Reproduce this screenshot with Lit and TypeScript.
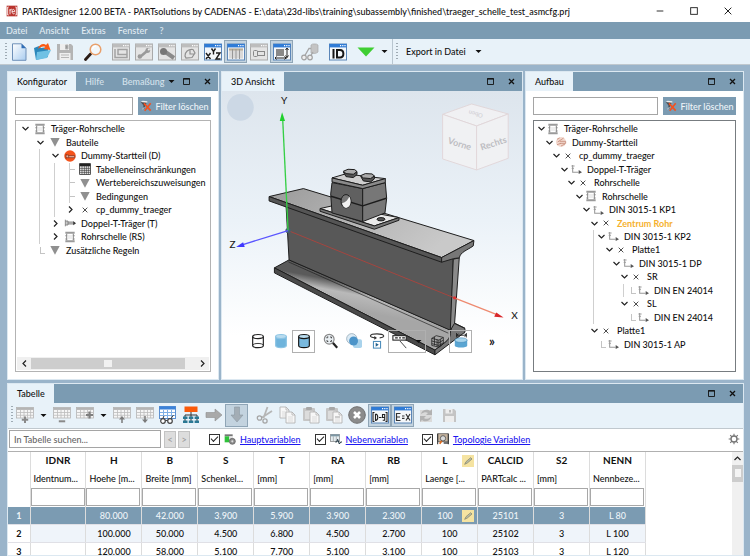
import { LitElement, html, css, svg, nothing } from "lit";
import { customElement, property } from "lit/decorators.js";
import { classMap } from "lit/directives/class-map.js";

/* ---------- icons, all on an 18 x 18 grid ---------- */
const frame = (inner: unknown, active = false) => svg`
  <rect x="0.5" y="1" width="17" height="16" fill=${active ? "#f4f7fa" : "#e4e4e4"} stroke=${active ? "#5b86b8" : "#a9a9a9"}/>
  <rect x="0.5" y="1" width="17" height="3.4" fill=${active ? "#2f7bd6" : "#bdbdbd"}/>
  <path d="M11 2.7h1.2M13.2 2.7h1.2M15.4 2.7h1.2" stroke="#fff" stroke-width="1.2"/>${inner}`;
const gridIcon = (extra: unknown) => svg`
  <rect x="0.5" y="1.5" width="17" height="10.5" fill="#f6f6f6" stroke="#b4b4b4" stroke-width="0.8"/>
  <rect x="0.5" y="1.5" width="17" height="2.4" fill="#b5b5b5"/>
  <path d="M1 6.5h16M1 9.3h16M4.5 4v8M8 4v8M11.5 4v8M14.6 4v8" stroke="#bcbcbc" stroke-width="0.8"/>${extra}`;
const sheet = (x: number, y: number) => svg`<path d="M${x} ${y}h6l3 3v8h-9z" fill="#f7f7f7" stroke="#b3b3b3" stroke-width="0.9"/><path d="M${x + 6} ${y}v3h3" fill="none" stroke="#b3b3b3" stroke-width="0.8"/><path d="M${x + 2} ${y + 5}h5M${x + 2} ${y + 7}h5M${x + 2} ${y + 9}h5" stroke="#d0d0d0" stroke-width="0.7"/>`;
const clip = svg`<rect x="1" y="2" width="12" height="13" rx="1" fill="#c6c6c6"/><rect x="4" y="1" width="6" height="3" rx="1" fill="#a8a8a8"/><rect x="3" y="5" width="8" height="8" fill="#dcdcdc"/>${sheet(8, 6)}`;
const cyl = (fill: string, stroke: string) => svg`<path d="M3 4v10c0 3.2 12 3.2 12 0V4" fill=${fill} stroke=${stroke} stroke-width="1.3"/><ellipse cx="9" cy="4" rx="6" ry="2.3" fill=${fill === "none" ? "none" : "#b9dcef"} stroke=${stroke} stroke-width="1.3"/>`;

const ICONS: Record<string, unknown> = {
  newDoc: svg`<defs><linearGradient id="nd" x2="1" y2="1"><stop stop-color="#fff"/><stop offset="1" stop-color="#a9cdf0"/></linearGradient></defs><path d="M2.5 0.8h9l4.5 4.5v12H2.5z" fill="url(#nd)" stroke="#6e90b8"/><path d="M11.5 0.8v4.5H16z" fill="#2f6db5"/>`,
  open: svg`<path d="M1 5l5-2 2 2 7-1v10l-12 3z" fill="#2b87ba"/><path d="M4 9l14-2-4 8-11 2z" fill="#6fc1e4"/><path d="M5 6C6 1 11 0 13 2l2-2 2.500 7-7-1 2-2c-3-1-5 0-7.500 2z" fill="#fa5a14"/>`,
  save: svg`<path d="M1 1h14l2 2v14H1z" fill="#b4b4b4"/><path d="M4 1h9v6H4zM3.500 10h11v7h-11z" fill="#eee"/><path d="M9.500 2h2.500v4H9.500zM5 12h8M5 14.500h8" fill="#999" stroke="#b5b5b5"/>`,
  search: svg`<path d="M1.500 16.500l5-5.500" stroke="#2b1c16" stroke-width="2.800" stroke-linecap="round"/><circle cx="11.500" cy="6.500" r="5.300" fill="#f3f8fb" stroke="#e9a06c" stroke-width="1.500"/><path d="M8.500 6c.500-2 2-3 3.500-3" fill="none" stroke="#fff" stroke-width="1.200"/>`,
  winTree: frame(svg`<path d="M3 6v8.500h12V6.500H6v5h9" fill="none" stroke="#a2a2a2" stroke-width="1.500"/>`),
  winWrench: frame(svg`<path d="M5 14l7-6" stroke="#9a9a9a" stroke-width="2.600"/><circle cx="4.800" cy="13.500" r="2.200" fill="#9a9a9a"/><circle cx="12.800" cy="7.500" r="2.400" fill="#9a9a9a"/><circle cx="13.800" cy="6.500" r="1.100" fill="#eee"/>`),
  winScrew: frame(svg`<path d="M6 8l10 7" stroke="#8a8a8a" stroke-width="4"/><circle cx="5.500" cy="8.500" r="3.500" fill="#777"/>`),
  winPoly: frame(svg`<path d="M4 13c0-4 3-7 8-6.500l2 3.500-3 4.500-6 .500zM9 6.500V11h5" fill="none" stroke="#909090" stroke-width="1.200"/>`),
  winXyz: frame(svg`<path d="M2 10l4.500 6M6.500 10L2 16M7.500 5.500l2 3 2-3M9.500 8.500v3M12 10h4l-4 6h4.500" fill="none" stroke="#1d1d1d" stroke-width="1.400"/>`, true),
  winCols: frame(svg`<path d="M2 5.500h14v10H2z" fill="#d9d9d9"/><path d="M2 5.500h14v2H2z" fill="#b9ad96"/><path d="M5.500 6v10M9 6v10M12.500 6v10" stroke="#979797"/>`, true),
  winTag: frame(svg`<rect x="3.500" y="7.500" width="4" height="6" rx="1" fill="none" stroke="#888"/><rect x="7.500" y="8.500" width="7" height="4" fill="none" stroke="#888"/>`),
  winDim: frame(svg`<rect x="3" y="6" width="8" height="7" fill="#888"/><path d="M14 5.500v9M2 15h12M12.500 7L14 5l1.500 2M12.500 12.500L14 14.500l1.500-2M3.500 13.500L2 15l1.500 1.500M11.500 13.500L13 15l-1.500 1.500" fill="none" stroke="#222"/>`, true),
  scan: svg`<path d="M10 2c1-1.500 6-1.500 7 0v7c-1 1.500-5 2-7 1z" fill="#c4c4c4" stroke="#aaa" stroke-width="0.700"/><path d="M3 14L8 5.500h2M9 14l3-5" fill="none" stroke="#a6a6a6" stroke-width="1.300"/><circle cx="3" cy="14.500" r="2.300" fill="#eee" stroke="#a2a2a2" stroke-width="1.200"/><circle cx="9" cy="14.500" r="2.300" fill="#eee" stroke="#a2a2a2" stroke-width="1.200"/>`,
  winId: frame(svg`<path d="M4.500 6v9.500M8 7h3c4.500 0 4.500 7.500 0 7.500H8z" fill="none" stroke="#161616" stroke-width="2"/>`, true),
  down: svg`<path d="M0.500 4.500h17L9 13.500z" fill="#3fce33"/>`,
  tAdd: gridIcon(svg`<path d="M9 10.500v6.500M5.800 13.800h6.400" stroke="#8a8a8a" stroke-width="2"/>`),
  tDel: gridIcon(svg`<path d="M5.800 15.300h6.400" stroke="#8a8a8a" stroke-width="2"/>`),
  tCol: gridIcon(svg`<path d="M13.500 5.500v7M10 9h7" stroke="#7f7f7f" stroke-width="2.200"/>`),
  tUp: gridIcon(svg`<path d="M9 17v-5" stroke="#7a7a7a" stroke-width="1.500"/><path d="M6 13.500l3-3.500 3 3.500z" fill="#7a7a7a"/>`),
  tDown: gridIcon(svg`<path d="M9 10v4" stroke="#7a7a7a" stroke-width="1.500"/><path d="M6 13.500l3 3.500 3-3.500z" fill="#7a7a7a"/>`),
  tView: svg`<rect x="0.500" y="0.500" width="16" height="12" fill="#fff" stroke="#5b8fd0"/><rect x="0.500" y="0.500" width="16" height="3" fill="#3b82d9"/><path d="M1 6.500h15M1 9.500h15M4.500 4v8M8.500 4v8M12.500 4v8" stroke="#7fb0e6"/><path d="M3 14l2-4M11 14l3.500-5" stroke="#444"/><circle cx="4" cy="15" r="2.300" fill="#fff" stroke="#444" stroke-width="1.200"/><circle cx="11" cy="15" r="2.300" fill="#fff" stroke="#444" stroke-width="1.200"/><path d="M6.300 14.500h2.400" stroke="#444"/>`,
  tTree: svg`<rect x="2.500" y="0.500" width="13" height="5.500" fill="#fb5a0a"/><path d="M9 6v3M3 9h12M3 9v8M9 9v8M15 9v8" stroke="#333" fill="none"/><path d="M1 10.500h4.500v2.500H1zM6.800 10.500h4.500v2.500H6.800zM12.600 10.500H17v2.500h-4.400zM1 14.500h4.500V17H1zM6.800 14.500h4.500V17H6.800zM12.600 14.500H17V17h-4.400z" fill="#2a7894"/>`,
  arrowR: svg`<path d="M1 6.500h9V3l7 6-7 6v-3.500H1z" fill="#a9a9a9" stroke="#8f8f8f" stroke-width="0.600"/>`,
  arrowD: svg`<path d="M6.500 1v8H3l6 7 6-7h-3.500V1z" fill="#a3adb5" stroke="#8c98a2" stroke-width="0.600"/>`,
  cut: svg`<path d="M11.500 1L7.500 12M16 5L6 11.500" stroke="#b6b6b6" stroke-width="1.800"/><circle cx="3.500" cy="12" r="2.200" fill="none" stroke="#a6a6a6" stroke-width="1.300"/><circle cx="9" cy="15" r="2.100" fill="none" stroke="#a6a6a6" stroke-width="1.300"/>`,
  copy: svg`${sheet(1, 1)}${sheet(7, 6)}`,
  paste: clip,
  paste2: svg`${clip}<path d="M10 11h5" stroke="#b0b0b0"/>`,
  cancel: svg`<circle cx="9" cy="9" r="8.300" fill="#8b8b8b" stroke="#707070"/><path d="M6 6l6 6M12 6l-6 6" stroke="#fff" stroke-width="2.600"/>`,
  range: frame(svg`<path d="M3.500 6.500H2v9h1.500M14.500 6.500H16v9h-1.500M4.500 8v6.500c3 0 3-6.500 0-6.500M8 11.500h2.500M13.500 11.500h-2V8.500h2.200v5.700h-2" fill="none" stroke="#222" stroke-width="1.100"/>`, true),
  formula: frame(svg`<path d="M6.500 7.500H2.500v7h4M2.500 11h3.500M8 10h2.500M8 12.300h2.500M12 8l4 6.500M16 8l-4 6.500" fill="none" stroke="#333" stroke-width="1.200"/>`, true),
  reload: svg`<path d="M3 4h12v12H3z" fill="#dadada"/><path d="M4 8c1-5 7-5 9-3l2-2v6H9l2-2c-2-1.500-4-1-7 1zM14 11c-1 5-7 5-9 3l-2 2v-6h6l-2 2c2 1.500 4 1 7-1z" fill="#b2b2b2"/>`,
  saveSmall: svg`<path d="M3 3h11l2 2v11H3z" fill="#c4c4c4"/><path d="M5.500 3h7v4.500h-7zM5 10h9v6H5z" fill="#ededed"/><path d="M10 4v2.500" stroke="#aaa" stroke-width="1.500"/>`,
  cylWire: svg`${cyl("none", "#222")}<path d="M3 14c0-3 12-3 12 0" fill="none" stroke="#222"/>`,
  cylSolid: cyl("#6fb4dc", "#8cc4e4"),
  cylEdge: cyl("#79b9de", "#151515"),
  zoomFit: svg`<path d="M11 11l5 5.500" stroke="#222" stroke-width="2.500"/><circle cx="7" cy="7" r="5.500" fill="#e9eff3" stroke="#8a8a8a" stroke-width="1.300"/><path d="M4.500 6V4.500H6M8 4.500h1.500V6M9.500 8v1.500H8M6 9.500H4.500V8" stroke="#333" fill="none"/>`,
  shade: svg`<circle cx="6.500" cy="6.500" r="5.800" fill="#dcebf5" stroke="#9fb2c0"/><rect x="8" y="7" width="10" height="10" rx="2" fill="#a9d3ec"/><circle cx="8.500" cy="9" r="5" fill="#4b94c9"/>`,
  rotate: svg`<path d="M7 5.500C-1 5 0 1 9 1s10 4 3 4.500" fill="none" stroke="#333" stroke-width="1.200"/><path d="M6 3.500v4l3-2z" fill="#333"/><rect x="5" y="9.500" width="8" height="7.500" fill="#fff" stroke="#4d8dbb" stroke-width="1.200"/><path d="M7.500 11v4.500l3.500-2.200z" fill="#22618f"/>`,
  measure: svg`<rect x="1" y="3" width="15" height="5" fill="#fff" stroke="#222" stroke-width="1.200"/><path d="M3.500 5.500h3M8 5.500h2M11.500 5.500h3" stroke="#222" stroke-width="1.500"/><path d="M9 9l7 8" stroke="#333"/>`,
  mesh: svg`<path d="M2 6l5-3 8 2v7l-5 4-8-2zM2 6l8 2 5-3M10 8v8M5 4.500v9.500M8 7.500v8M12 7v8M2 9l8 2 5-3M2 12l8 2 5-3" fill="none" stroke="#222" stroke-width="0.900"/>`,
  section: svg`<path d="M2 8v6c0 3 14 3 14 0V8z" fill="#5aa5d2"/><ellipse cx="9" cy="8" rx="7" ry="2.600" fill="#a9d5ec" stroke="#3b83b3" stroke-width="0.600"/><path d="M4 2.500h11M4 0v5M15 0v5M6 1L4 2.500 6 4M13 1l2 1.500L13 4" fill="none" stroke="#222"/>`,
  asm: svg`<path d="M2 1h14v3H2zM2 14h14v3H2z" fill="#9a9a9a"/><path d="M4 4v10M14 4v10M2 7h3M13 7h3M2 12h3M13 12h3" stroke="#8c8c8c" stroke-width="1.600"/><path d="M6 6h6v6H6z" fill="#eee"/>`,
  tri: svg`<path d="M2 3h14L9 16z" fill="#909090"/>`,
  start: svg`<circle cx="9" cy="9" r="8.600" fill="#f4531b"/><path d="M3 6v7M3 7.500h4v4H3M7 8.500h9v3H7" fill="#e9b2a0" stroke="#7a2b16" stroke-width="1"/>`,
  startPale: svg`<circle cx="9" cy="9" r="7.600" fill="#f3d9cf"/><path d="M3 5l4-2M4 9l9-6M3 13l6-2M7 8h9v3H7M9 15l6-3" fill="none" stroke="#c9907d" stroke-width="1.300"/>`,
  table: svg`<rect x="1" y="1" width="16" height="16" fill="#fff" stroke="#222" stroke-width="1.200"/><path d="M1 1h16v4H1z" fill="#222"/><path d="M1 8h16M1 11h16M1 14h16M4.500 4v13M8 4v13M11 4v13M14 4v13" stroke="#333"/>`,
  x: svg`<path d="M5.500 5.500l7 7M12.500 5.500l-7 7" stroke="#333" stroke-width="1.300"/>`,
  part: svg`<path d="M2 4v10M2 6h4v6H2M6 7.500h9v3H6" fill="#c9c9c9" stroke="#777" stroke-width="1.200"/><path d="M14 6.500L18 9.500l-4 3z" fill="#333"/>`,
  partLight: svg`<path d="M4 3v11h9" fill="none" stroke="#999" stroke-width="1.600"/><path d="M2 4.500h5M2.500 8H6" stroke="#999" stroke-width="1.300"/><path d="M13 10.500L18 14l-5 2.500z" fill="#555"/>`,
  filterX: svg`<path d="M1 3h10l-3.500 5v5L5 11V8z" fill="#4c5157"/><path d="M1 3l3-2 7 1v2z" fill="#eee"/><path d="M6 5l10 11M16 5L7 16" stroke="#f4511e" stroke-width="2.500"/><path d="M3 14l4-3" stroke="#bbb" stroke-width="1.500"/>`,
  mainVar: svg`<path d="M1 2h12v3H1z" fill="#777"/><path d="M1 5h7v9H1z" fill="#2fc23a"/><path d="M8 5h5v4H8z" fill="#e3e3e3"/><circle cx="12.500" cy="12.500" r="4.500" fill="#8c8c8c" stroke="#555"/><circle cx="12.500" cy="12.500" r="1.600" fill="#ddd"/>`,
  sideVar: svg`<rect x="1" y="2" width="13" height="11" fill="#e5edf1" stroke="#777"/><path d="M1 2h13v3H1z" fill="#7d97a4"/><path d="M5 5v8M9.500 5v8" stroke="#999"/><path d="M8 13.500h2l1.500-4 2.500 7 2-3h2" fill="none" stroke="#1c3340" stroke-width="1.500"/>`,
  topoVar: svg`<path d="M1 1h16v12H1z" fill="#c7b49e" stroke="#444"/><path d="M1 1v16M17 1v16" stroke="#333" stroke-width="1.600"/><circle cx="9" cy="8" r="4" fill="#dcdcdc" stroke="#555" stroke-width="1.300"/><path d="M4 16l3-4" stroke="#e1691b" stroke-width="2.600"/><path d="M10 15h7" stroke="#333" stroke-width="2"/>`,
  gear: svg`<circle cx="9" cy="9" r="4.500" fill="none" stroke="#777" stroke-width="2"/><path d="M9 1v4M9 13v4M1 9h4M13 9h4M3.300 3.300l3 3M11.700 11.700l3 3M14.700 3.300l-3 3M6.300 11.700l-3 3" stroke="#777" stroke-width="1.700"/>`,
  edit: svg`<rect width="18" height="18" fill="#f5e3a1"/><path d="M4 14l2-4 7-6 2 2-7 6z" fill="#b9bba4" stroke="#7b7f66"/>`,
  restore: svg`<path d="M3 3h12v12H3z" fill="none" stroke="#111" stroke-width="1.800"/><path d="M2.500 4h13" stroke="#111" stroke-width="2.400"/>`,
  close: svg`<path d="M4 4l10 10M14 4L4 14" stroke="#111" stroke-width="2.600"/>`,
  winMin: svg`<path d="M4 9h10" stroke="#222" stroke-width="1.400"/>`,
  winMax: svg`<rect x="4" y="4" width="10" height="10" fill="none" stroke="#222" stroke-width="1.400"/>`,
  winClose: svg`<path d="M4 4l10 10M14 4L4 14" stroke="#222" stroke-width="1.500"/>`,
  caret: svg`<path d="M3 6h12l-6 6z" fill="#111"/>`,
  chevD: svg`<path d="M3 6l6 6 6-6" fill="none" stroke="#222" stroke-width="2.400"/>`,
  chevR: svg`<path d="M6 3l6 6-6 6" fill="none" stroke="#222" stroke-width="2.400"/>`,
  chevL: svg`<path d="M12 3L6 9l6 6" fill="none" stroke="#222" stroke-width="2.400"/>`,
  chevU: svg`<path d="M3 12l6-6 6 6" fill="none" stroke="#222" stroke-width="2.400"/>`,
  logo: svg`<path d="M1 1h16v16H1z" fill="#b9332d"/><path d="M4 3H2.500v12H4M14 3h1.500v12H14M6 14V6M6 8.500C7 6 8.500 6 9 7M9 10h4c0-5-4-4-4-.500 0 4 3 4.500 4 3" fill="none" stroke="#fff" stroke-width="1.300"/>`,
};
const icon = (name: string, size = "m") =>
  html`<svg class="ic ${size}" viewBox="0 0 18 18" aria-hidden="true">${ICONS[name]}</svg>`;

const base = css`
  * { box-sizing: border-box; }
  :host { font: 500 9px/13px Lato, "Open Sans", sans-serif; color: #111; }
  button, input { font: inherit; color: inherit; margin: 0; padding: 0; border: 0; border-radius: 0; background: none; }
  button { display: inline-flex; align-items: center; justify-content: center; white-space: nowrap; }
  .ic { display: block; flex: none; width: 18px; height: 18px; }
  .ic.s { width: 12px; height: 12px; }
  .ic.xs { width: 9px; height: 9px; }
`;

/* ---------- toolbar ---------- */
@customElement("tool-strip")
class ToolStrip extends LitElement {
  @property({ attribute: false }) items: string[] = [];
  static styles = [base, css`
    :host { display: flex; align-items: center; flex: none; height: 26px; background: #e8f2f9; border-bottom: 1px solid #c0c8ce; }
    .grip { width: 2px; height: 18px; background: repeating-linear-gradient(#9fabb4 0 1px, transparent 1px 3px); }
    .cell { width: 23px; height: 23px; flex: none; }
    .on { background: #c3d3df; border: 1px solid #8fa5b6; }
    .drop { width: 14px; height: 23px; }
    .gap { width: 5px; }
    .line { width: 1px; align-self: stretch; margin: 0 3px 0 1px; background: #b9c6d0; }
    .text { padding: 0 6px 0 8px; }
  `];
  render() {
    return this.items.map((i) => {
      if (i === "-") return html`<span class="gap"></span>`;
      if (i === "grip") return html`<span class="grip"></span>`;
      if (i === "line") return html`<span class="line"></span>`;
      if (i === "v") return html`<button class="drop" aria-label="Optionen">${icon("caret", "xs")}</button>`;
      if (i.startsWith("=")) return html`<button class="text">${i.slice(1)}</button>`;
      const on = i.startsWith("*");
      const name = on ? i.slice(1) : i;
      return html`<button class=${classMap({ cell: true, on })} aria-label=${name} aria-pressed=${on}>${icon(name)}</button>`;
    });
  }
}

/* ---------- dock panel with tabs ---------- */
@customElement("dock-panel")
class DockPanel extends LitElement {
  @property({ attribute: false }) tabs: string[] = [];
  @property({ type: Boolean }) more = false;
  static styles = [base, css`
    :host { display: flex; flex-direction: column; min-width: 0; min-height: 0; border: 1px solid #dce8f1; background: #fff; overflow: hidden; }
    .head { display: flex; flex: none; height: 19px; background: #7b9bb2; }
    .tab { padding: 0 9px; color: #d5e2ec; }
    .tab.active { background: #e8f2f9; color: #111; }
    .tab.last { padding-right: 2px; }
    .space { flex: 1; }
    .tool { width: 21px; }
  `];
  render() {
    return html`<header class="head" role="tablist">
        ${this.tabs.map((t, i) => html`<button role="tab" aria-selected=${i === 0} class=${classMap({ tab: true, active: i === 0, last: this.more && i === this.tabs.length - 1 })}>${t}</button>`)}
        ${this.more ? html`<button aria-label="Weitere">${icon("caret", "xs")}</button>` : nothing}
        <span class="space"></span>
        <button class="tool" aria-label="Abdocken">${icon("restore", "xs")}</button>
        <button class="tool" aria-label="Schließen">${icon("close", "xs")}</button>
      </header><slot></slot>`;
  }
}

/* ---------- filter line and tree ---------- */
interface Node { d: number; icon: string; text: string; open?: boolean; leaf?: boolean; hot?: boolean; guides?: number[]; elbow?: boolean }

@customElement("tree-view")
class TreeView extends LitElement {
  @property({ attribute: false }) nodes: Node[] = [];
  @property({ type: Number }) step = 15;
  @property({ type: Boolean, reflect: true }) wide = false;
  @property({ type: Boolean, reflect: true }) scroller = false;
  static styles = [base, css`
    :host { display: flex; flex-direction: column; flex: 1; min-height: 0; padding: 6px 7px 7px; gap: 5px; }
    .filter { display: flex; gap: 5px; flex: none; height: 18px; }
    .field { flex: 1; min-width: 0; border: 1px solid #a5a5a5; background: #fff; }
    .clear { width: 73px; gap: 3px; background: #7b9bb2; color: #eef4f8; }
    .box { display: flex; flex-direction: column; flex: 1; min-height: 0; border: 1px solid #b3b3b3; overflow: hidden; }
    :host([wide]) .box { border: 1px solid #777c80; }
    .list { list-style: none; margin: 1px 0 0; padding: 0 0 0 4px; display: grid; grid-auto-rows: 1fr; height: 135px; flex: none; }
    :host([wide]) .list { height: 229px; padding-left: 2px; }
    .row { position: relative; display: flex; align-items: center; white-space: nowrap; min-height: 0; }
    .twist { width: 10px; flex: none; display: flex; justify-content: center; }
    .pic { width: 12px; flex: none; margin: 0 5px 0 4px; }
    :host([wide]) .pic { margin: 0 5px 0 1px; }
    .hot { color: #f5b12e; font-weight: 700; }
    .guide { position: absolute; top: 0; bottom: 0; width: 1px; background: #cfcfcf; }
    .elbow { width: 6px; height: 1px; background: #c4c4c4; margin-left: 4px; }
    .corner { align-self: flex-start; height: 7px; width: 5px; margin-left: 4px; border: solid #c4c4c4; border-width: 0 0 1px 1px; }
    .fill { flex: 1; }
    .bar { display: flex; align-items: center; height: 13px; flex: none; background: #f0f0f0; margin: 0 1px 1px; }
    .arrow { width: 14px; height: 13px; }
    .track { flex: 1; height: 11px; margin-right: 10px; background: #cdcdcd; display: flex; justify-content: center; align-items: center; }
    .nub { width: 8px; height: 7px; background: #f1f1f1; }
  `];
  private left(d: number) { return Math.round(d * this.step / 2); }
  render() {
    return html`
      <div class="filter"><input class="field" aria-label="Filter"><button class="clear">${icon("filterX", "s")}Filter löschen</button></div>
      <div class="box">
        <ul class="list" role="tree">${this.nodes.map((n) => html`
          <li class="row" role="treeitem" style="padding-left:${this.left(n.d)}px">
            ${(n.guides ?? []).map((g) => html`<span class="guide" style="left:${this.left(g) + 4}px"></span>`)}
            <span class="twist">${n.leaf ? html`<span class=${n.elbow ? "corner" : "elbow"}></span>` : icon(n.open === false ? "chevR" : "chevD", "xs")}</span>
            <span class="pic">${icon(n.icon, "s")}</span>
            <span class=${n.hot ? "hot" : ""}>${n.text}</span>
          </li>`)}</ul>
        <span class="fill"></span>
        ${this.scroller ? html`<div class="bar"><button class="arrow" aria-label="Links">${icon("chevL", "xs")}</button><span class="track"><span class="nub"></span></span><button class="arrow" aria-label="Rechts">${icon("chevR", "xs")}</button></div>` : nothing}
      </div>`;
  }
}

/* ---------- 3D view ---------- */
@customElement("model-view")
class ModelView extends LitElement {
  static styles = [base, css`
    :host { position: relative; display: block; flex: 1; min-height: 0; background: linear-gradient(#dde5ed, #ebf2f8 45%, #fff 85%); overflow: hidden; }
    .scene { display: block; width: 100%; height: 100%; }
    .axis { font-size: 30px; fill: #222; }
    .face { font-size: 27px; font-weight: 700; fill: #bdbdc2; }
    .top { font-size: 18px; fill: #cfcfd3; }
    .tools { position: absolute; left: 24px; right: 10px; bottom: 26px; display: flex; align-items: center; height: 23px; }
    .cell { width: 23px; height: 23px; flex: none; }
    .cell .m { width: 16px; height: 16px; }
    .on { border: 1px solid #b0b0b0; }
    .split { width: 38px; justify-content: flex-start; gap: 6px; padding-left: 3px; }
    .gap { width: 4px; }
    .more { margin-left: 12px; font-size: 13px; font-weight: 700; width: 16px; height: 23px; }
  `];
  render() {
    return html`
      <svg class="scene" viewBox="6 3 900 864" role="img" aria-label="3D Modell">
        <defs>
          <linearGradient id="fl" x2="1" y2="0.400"><stop stop-color="#9a9a9a"/><stop offset="0.500" stop-color="#b4b4b4"/><stop offset="1" stop-color="#c9c9c9"/></linearGradient>
          <linearGradient id="bf" x1="0.500" y1="0.300" x2="0.400" y2="0.550"><stop stop-color="#5a5a5a"/><stop offset="0.400" stop-color="#b9b9b9"/><stop offset="1" stop-color="#a6a6a6"/></linearGradient>
        </defs>
        <circle cx="61" cy="52" r="40" fill="#ccd8e5"/>
        <g fill="#f2f2f4" stroke="#e2d6d8" stroke-width="3" stroke-linejoin="round" opacity="0.900">
          <path d="M668 73l87-31 110 30-95 36z"/><path d="M668 73l102 35v132l-102-33z"/><path d="M865 72v133l-95 35V108z"/>
        </g>
        <text class="face" x="682" y="160" transform="rotate(17 682 160)">Vorne</text>
        <text class="face" x="785" y="182" transform="rotate(-18 785 182)">Rechts</text>
        <text class="top" x="790" y="72" transform="rotate(196 790 72)">Oben</text>
        <g stroke="#1e1e1e" stroke-width="3" stroke-linejoin="round">
          <path d="M163 534l44-24 484 210 9-22 35 17-90 66z" fill="url(#bf)"/>
          <path d="M163 534l482 247v14L163 549z" fill="#4a4a4a"/>
          <path d="M645 781c30-25 50-30 46-60l9-22 35 17v11l-90 68z" fill="#777"/>
          <path d="M198 348l502 160-7 214-486-212z" fill="#585858"/>
          <path d="M700 508l18-4-14 196-13 22z" fill="#8a8a8a"/>
          <path d="M205 516l480 214" fill="none" stroke-width="2"/>
          <path d="M147 320l103-24 512 156-97 51z" fill="url(#fl)"/>
          <path d="M147 320l518 183v14L147 333z" fill="#555"/>
          <path d="M665 503l97-51-2 16c-20 14-38 18-42 36l-16 2-37 11z" fill="#777"/>
        </g>
        <path d="M204 422L703 624" stroke="#a5453f" stroke-width="3"/>
        <g stroke="#1c1c1c" stroke-width="3" stroke-linejoin="round">
          <path d="M300 356l40-9 197 36-74 25z" fill="#e9e9e9"/>
          <path d="M300 356l163 52 74-25v8l-74 27-163-54z" fill="#777"/>
          <ellipse cx="483" cy="388" rx="12" ry="5" fill="#555"/>
          <path d="M336 278l-4 34 4 57 92 26V296z" fill="#606060"/>
          <path d="M428 296l68-18 4 47-5 44-67 26z" fill="#777"/>
          <path d="M333 319l95 29 71-23" fill="none" stroke-width="4"/>
          <ellipse cx="378" cy="334" rx="15" ry="20" fill="#777"/>
          <path d="M366 340c12-2 18-10 22-20 8 16 2 34-10 34-6 0-10-6-12-14z" fill="#f2f2f2" stroke="none"/>
          <path d="M336 264l40-12 120 14-68 20z" fill="#cfcfcf"/>
          <path d="M336 264l92 22 68-20v12l-68 18-92-20z" fill="#8a8a8a"/>
          <path d="M370 246l8 14 22 3 11-9v-9z" fill="#555"/><path d="M370 244l14-6 20 1 7 6-11 8-22-2z" fill="#aaa"/>
          <path d="M422 259l8 14 22 3 11-9v-9z" fill="#555"/><path d="M422 257l14-6 20 1 7 6-11 8-22-2z" fill="#aaa"/>
        </g>
        <circle cx="204" cy="422" r="8" fill="#44606e"/>
        <path d="M204 422L188 90" stroke="#35cf45" stroke-width="4"/><path d="M186 67l9 26h-16z" fill="#1fd02c"/>
        <path d="M204 422L66 465" stroke="#5a55ff" stroke-width="4"/><path d="M48 471l21-14 5 14z" fill="#4038ff"/>
        <path d="M703 624l130 51" stroke="#ee8a70" stroke-width="4"/><path d="M851 683l-28-2 6-13z" fill="#d8262a"/><circle cx="704" cy="624" r="5" fill="#e03030"/>
        <text class="axis" x="183" y="41">Y</text><text class="axis" x="28" y="474">Z</text><text class="axis" x="874" y="687">X</text>
      </svg>
      <div class="tools">
        <button class="cell" aria-label="Drahtmodell">${icon("cylWire")}</button>
        <button class="cell" aria-label="Schattiert">${icon("cylSolid")}</button>
        <button class="cell on" aria-label="Schattiert mit Kanten">${icon("cylEdge")}</button>
        <span class="gap"></span>
        <button class="cell" aria-label="Einpassen">${icon("zoomFit")}</button>
        <button class="cell" aria-label="Transparenz">${icon("shade")}</button>
        <button class="cell" aria-label="Drehen">${icon("rotate")}</button>
        <button class="cell on split" aria-label="Messen">${icon("measure")}${icon("caret", "xs")}</button>
        <button class="cell" aria-label="Netz">${icon("mesh")}</button>
        <button class="cell on" aria-label="Schnitt">${icon("section")}</button>
        <button class="more" aria-label="Mehr">»</button>
      </div>`;
  }
}

/* ---------- table ---------- */
const COLS = [["IDNR", "Identnum..."], ["H", "Hoehe [m..."], ["B", "Breite [mm]"], ["S", "Schenkel..."], ["T", "[mm]"], ["RA", "[mm]"], ["RB", "[mm]"], ["L", "Laenge [..."], ["CALCID", "PARTcalc ..."], ["S2", "[mm]"], ["NENN", "Nennbeze..."]];
const ROWS = [
  ["", "80.000", "42.000", "3.900", "5.900", "3.900", "2.300", "100", "25101", "3", "L 80"],
  ["", "100.000", "50.000", "4.500", "6.800", "4.500", "2.700", "100", "25102", "3", "L 100"],
  ["", "120.000", "58.000", "5.100", "7.700", "5.100", "3.100", "100", "25103", "3", "L 120"],
];

@customElement("variable-table")
class VariableTable extends LitElement {
  static styles = [base, css`
    :host { display: flex; flex-direction: column; flex: 1; min-height: 0; }
    .search { display: flex; align-items: center; flex: none; height: 22px; padding: 0 3px 1px 1px; }
    .find { width: 152px; height: 18px; padding: 0 4px; border: 1px solid #a5a5a5; }
    .find::placeholder { color: #666; opacity: 1; }
    .nav { width: 12px; height: 17px; margin-left: 3px; background: #ddd; border: 1px solid #c3c3c3; color: #999; }
    .nav + .nav { margin-left: 2px; }
    .check { display: flex; align-items: center; gap: 4px; margin-left: 14px; }
    .first { margin-left: 19px; }
    .box { appearance: none; width: 11px; height: 11px; border: 1px solid #333; background: #fff; display: grid; place-items: center; }
    .box:checked::before { content: ""; width: 6px; height: 3px; border: solid #222; border-width: 0 0 1px 1px; transform: rotate(-45deg); margin-top: -2px; }
    .link { color: #1d18f0; text-decoration: underline; }
    .space { flex: 1; }
    .area { display: flex; flex: 1; min-height: 0; border-top: 1px solid #b0b0b0; overflow: hidden; }
    .grid { flex: none; align-self: flex-start; border-collapse: collapse; table-layout: fixed; width: 638px; }
    .num { width: 22px; }
    th, td { padding: 0; border-right: 1px solid #dcdcdc; overflow: hidden; white-space: nowrap; }
    .name { height: 18px; font-size: 10px; font-weight: 700; }
    .desc { height: 18px; text-align: left; font-weight: 500; padding-left: 3px; }
    .pair { display: flex; align-items: center; justify-content: space-between; padding: 0 3px 0 20px; }
    .pair.cell { padding-left: 15px; }
    .fcell { height: 19px; }
    .fin { display: block; width: 54px; height: 18px; border: 1px solid #a8a8a8; }
    .row { height: 18px; }
    .row td, .row th { text-align: center; border-bottom: 1px solid #e0e0e6; }
    .row th { font-weight: 700; }
    .alt { background: #eff4fa; }
    .alt th { background: #fff; }
    .sel { background: #7b9bb2; color: #eef4f8; }
    .scroll { width: 11px; margin-left: auto; background: #f0f0f0; display: flex; flex-direction: column; }
    .up { height: 13px; }
    .thumb { height: 17px; background: #cdcdcd; display: grid; place-items: center; }
    .nub { width: 6px; height: 8px; background: #f4f4f4; }
  `];
  render() {
    const checks = [["mainVar", "Hauptvariablen"], ["sideVar", "Nebenvariablen"], ["topoVar", "Topologie Variablen"]];
    return html`
      <div class="search">
        <input class="find" placeholder="In Tabelle suchen..." aria-label="In Tabelle suchen">
        <button class="nav" aria-label="Zurück">&lt;</button><button class="nav" aria-label="Weiter">&gt;</button>
        ${checks.map(([ic, t], i) => html`<span class=${classMap({ check: true, first: i === 0 })}><input class="box" type="checkbox" checked aria-label=${t}>${icon(ic, "s")}<a class="link" href="#${ic}">${t}</a></span>`)}
        <span class="space"></span><button aria-label="Einstellungen">${icon("gear", "s")}</button>
      </div>
      <div class="area">
        <table class="grid">
          <colgroup><col class="num">${COLS.map(() => html`<col>`)}</colgroup>
          <thead>
            <tr><th class="name"></th>${COLS.map(([n]) => html`<th class="name" scope="col">${n === "L" ? html`<span class="pair">${n}${icon("edit", "s")}</span>` : n}</th>`)}</tr>
            <tr><th class="desc"></th>${COLS.map(([, d]) => html`<th class="desc">${d}</th>`)}</tr>
            <tr><th class="fcell"></th>${COLS.map(([n]) => html`<th class="fcell"><input class="fin" aria-label="Filter ${n}"></th>`)}</tr>
          </thead>
          <tbody>${ROWS.map((r, y) => html`<tr class=${classMap({ row: true, sel: y === 0, alt: y === 1 })}><th scope="row">${y + 1}</th>
            ${r.map((c, x) => html`<td>${x === 7 && y === 0 ? html`<span class="pair cell">${c}${icon("edit", "s")}</span>` : c}</td>`)}</tr>`)}</tbody>
        </table>
        <div class="scroll"><button class="up" aria-label="Nach oben">${icon("chevU", "xs")}</button><span class="thumb"><span class="nub"></span></span></div>
      </div>`;
  }
}

/* ---------- data ---------- */
const CONFIG: Node[] = [
  { d: 0, icon: "asm", text: "Träger-Rohrschelle" },
  { d: 2, icon: "tri", text: "Bauteile" },
  { d: 4, icon: "start", text: "Dummy-Startteil (D)", guides: [2] },
  { d: 6, icon: "table", text: "Tabelleneinschränkungen", leaf: true, guides: [2, 4, 6] },
  { d: 6, icon: "tri", text: "Wertebereichszuweisungen", leaf: true, guides: [2, 4, 6] },
  { d: 6, icon: "tri", text: "Bedingungen", leaf: true, guides: [2, 4, 6] },
  { d: 6, icon: "x", text: "cp_dummy_traeger", open: false, guides: [2, 4] },
  { d: 4, icon: "part", text: "Doppel-T-Träger (T)", open: false, guides: [2] },
  { d: 4, icon: "asm", text: "Rohrschelle (RS)", open: false, guides: [2] },
  { d: 2, icon: "tri", text: "Zusätzliche Regeln", leaf: true, elbow: true },
];
const BUILD: Node[] = [
  { d: 0, icon: "asm", text: "Träger-Rohrschelle" },
  { d: 1, icon: "startPale", text: "Dummy-Startteil" },
  { d: 2, icon: "x", text: "cp_dummy_traeger" },
  { d: 3, icon: "partLight", text: "Doppel-T-Träger" },
  { d: 4, icon: "x", text: "Rohrschelle" },
  { d: 5, icon: "asm", text: "Rohrschelle" },
  { d: 6, icon: "partLight", text: "DIN 3015-1 KP1" },
  { d: 7, icon: "x", text: "Zentrum Rohr", hot: true },
  { d: 8, icon: "partLight", text: "DIN 3015-1 KP2", guides: [7] },
  { d: 9, icon: "x", text: "Platte1", guides: [7] },
  { d: 10, icon: "partLight", text: "DIN 3015-1 DP", guides: [7] },
  { d: 11, icon: "x", text: "SR", guides: [7] },
  { d: 12, icon: "partLight", text: "DIN EN 24014", leaf: true, elbow: true, guides: [7, 11] },
  { d: 11, icon: "x", text: "SL", guides: [7] },
  { d: 12, icon: "partLight", text: "DIN EN 24014", leaf: true, elbow: true, guides: [7] },
  { d: 7, icon: "x", text: "Platte1" },
  { d: 8, icon: "partLight", text: "DIN 3015-1 AP", leaf: true, elbow: true },
];
const MAIN = ["grip", "newDoc", "open", "save", "-", "search", "-", "winTree", "winWrench", "winScrew", "winPoly", "winXyz", "*winCols", "winTag", "*winDim", "-", "scan", "-", "winId", "-", "down", "v", "line", "grip", "=Export in Datei", "v"];
const TABLE = ["grip", "tAdd", "v", "tDel", "tCol", "v", "tUp", "tDown", "tView", "tTree", "arrowR", "*arrowD", "-", "cut", "copy", "paste", "paste2", "cancel", "*range", "*formula", "reload", "saveSmall"];

@customElement("app-root")
class AppRoot extends LitElement {
  static styles = [base, css`
    :host { display: flex; flex-direction: column; height: 100vh; background: #9ab4ca; overflow: hidden; }
    .title { display: flex; align-items: center; flex: none; height: 22px; padding: 0 7px 0 6px; gap: 4px; background: #fff; white-space: nowrap; }
    .caption { flex: 1; overflow: hidden; }
    .wbtn { width: 30px; height: 22px; }
    .menu { display: flex; flex: none; height: 17px; padding-left: 6px; gap: 12px; background: #7b9bb2; color: #e2ebf2; }
    .main { padding-left: 5px; }
    .docks { display: grid; flex: 312 1 0; min-height: 0; grid-template-columns: 212fr 302fr 219fr; gap: 2px; margin: 6px 6px 0 7px; }
    .lower { flex: 173 1 0; margin: 3px 6px 0 7px; }
    .strip { padding-left: 3px; }
  `];
  render() {
    return html`
      <header class="title">${icon("logo", "s")}<span class="caption">PARTdesigner 12.00 BETA - PARTsolutions by CADENAS - E:\\data\\23d-libs\\training\\subassembly\\finished\\traeger_schelle_test_asmcfg.prj</span>
        <button class="wbtn" aria-label="Minimieren">${icon("winMin", "s")}</button><button class="wbtn" aria-label="Maximieren">${icon("winMax", "s")}</button><button class="wbtn" aria-label="Schließen">${icon("winClose", "s")}</button></header>
      <nav class="menu">${["Datei", "Ansicht", "Extras", "Fenster", "?"].map((m) => html`<button>${m}</button>`)}</nav>
      <tool-strip class="main" .items=${MAIN}></tool-strip>
      <main class="docks">
        <dock-panel .tabs=${["Konfigurator", "Hilfe", "Bemaßung"]} more><tree-view .nodes=${CONFIG} scroller></tree-view></dock-panel>
        <dock-panel .tabs=${["3D Ansicht"]}><model-view></model-view></dock-panel>
        <dock-panel .tabs=${["Aufbau"]}><tree-view .nodes=${BUILD} wide></tree-view></dock-panel>
      </main>
      <dock-panel class="lower" .tabs=${["Tabelle"]}><tool-strip class="strip" .items=${TABLE}></tool-strip><variable-table></variable-table></dock-panel>`;
  }
}
